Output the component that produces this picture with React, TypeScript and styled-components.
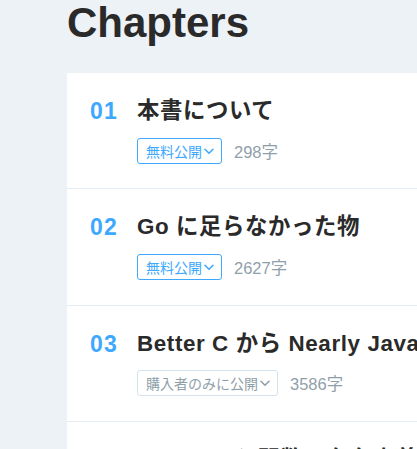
import React from "react";
import styled, { createGlobalStyle } from "styled-components";

const GlobalStyle = createGlobalStyle`
  html, body {
    margin: 0;
    padding: 0;
    background: #edf2f7;
    overflow: hidden;
  }
  body {
    font-family: "Liberation Sans", "Noto Sans CJK JP", sans-serif;
    color: #2a2a2a;
  }
`;

const Page = styled.div`
  padding-left: 67px;
  width: 760px;
`;

const Heading = styled.h2`
  margin: 0 0 27px;
  font-size: 42px;
  line-height: 1.1;
  font-weight: 700;
  color: #2a2a2a;
`;

const Panel = styled.ol`
  list-style: none;
  margin: 0;
  padding: 0;
  background: #fff;
`;

const Row = styled.li`
  display: flex;
  align-items: flex-start;
  padding: 21px 0 24.7px 23px;
  border-bottom: 1px solid #e4edf4;
`;

const Num = styled.div`
  width: 47px;
  flex-shrink: 0;
  padding-top: 1px;
  font-size: 23px;
  line-height: 33.6px;
  letter-spacing: 1.2px;
  font-weight: 700;
  color: #3ea8ff;
`;

const Body = styled.div`
  display: flex;
  flex-direction: column;
  min-width: 0;
`;

const Title = styled.h3`
  margin: 0;
  font-size: 22.4px;
  line-height: 33.6px;
  letter-spacing: 0.6px;
  font-weight: 700;
  white-space: nowrap;
  color: #2a2a2a;
`;

const Meta = styled.div`
  display: flex;
  align-items: center;
  gap: 12px;
  margin-top: 10px;
`;

const Badge = styled.span<{ $free: boolean }>`
  display: inline-flex;
  align-items: center;
  gap: 1px;
  height: 26px;
  box-sizing: border-box;
  padding: 0 6px 0 8px;
  border: 1px solid ${(p) => (p.$free ? "#3ea8ff" : "#d6e3ed")};
  border-radius: 3px;
  font-size: 14px;
  color: ${(p) => (p.$free ? "#3ea8ff" : "#8f9faa")};
  svg {
    width: 12px;
    height: 12px;
  }
`;

const Count = styled.span`
  font-size: 16.5px;
  color: #8f9faa;
`;

const Chevron = () => (
  <svg viewBox="0 0 12 12" fill="none" stroke="currentColor" strokeWidth="1.6" strokeLinecap="round" strokeLinejoin="round">
    <path d="M2 4.3 6 8.2l4-3.9" />
  </svg>
);

const chapters = [
  { n: "01", title: "本書について", free: true, count: "298字" },
  { n: "02", title: "Go に足らなかった物", free: true, count: "2627字" },
  { n: "03", title: "Better C から Nearly Java へ", free: false, count: "3586字" },
  { n: "04", title: "memory と関数の存在意義", free: false, count: "4120字" },
];

export default function App() {
  return (
    <>
      <GlobalStyle />
      <Page>
        <Heading>Chapters</Heading>
        <Panel>
          {chapters.map((c) => (
            <Row key={c.n}>
              <Num>{c.n}</Num>
              <Body>
                <Title>{c.title}</Title>
                <Meta>
                  <Badge $free={c.free}>
                    {c.free ? "無料公開" : "購入者のみに公開"}
                    <Chevron />
                  </Badge>
                  <Count>{c.count}</Count>
                </Meta>
              </Body>
            </Row>
          ))}
        </Panel>
      </Page>
    </>
  );
}
